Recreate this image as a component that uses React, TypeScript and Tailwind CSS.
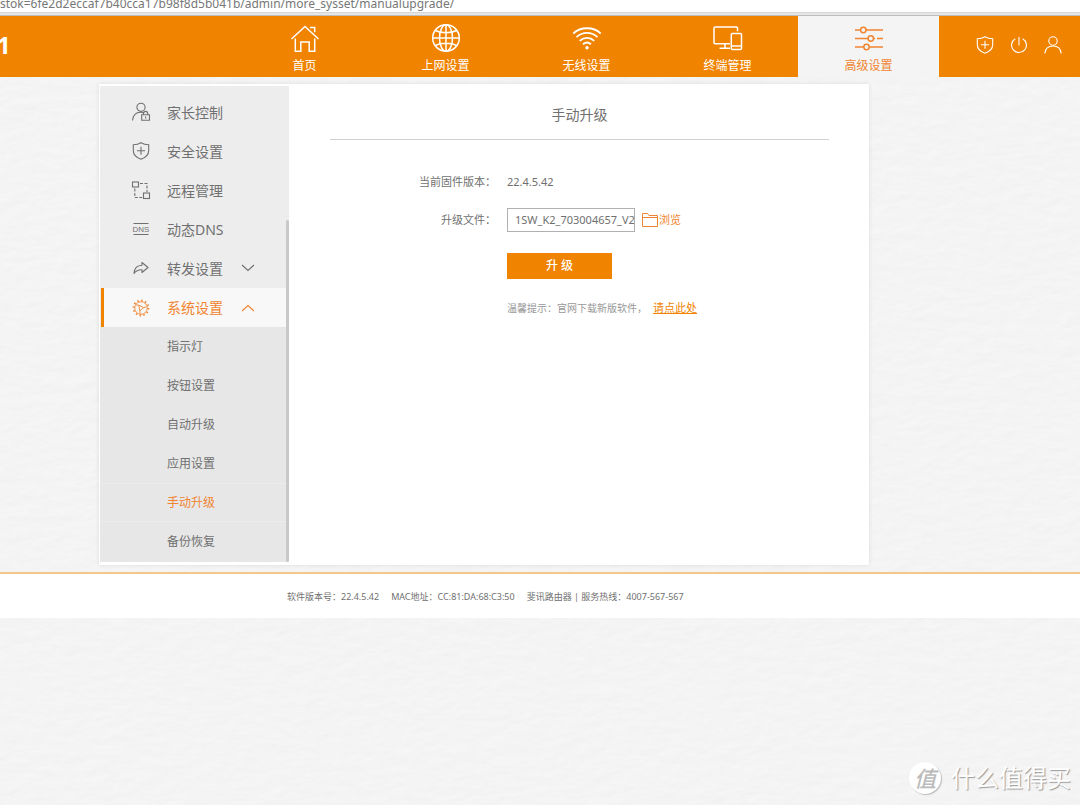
import { useState } from 'react'
import type { ReactNode } from 'react'

const NAV_ITEMS = [
  { id: 'home', label: '首页', icon: <HomeIcon /> },
  { id: 'wan', label: '上网设置', icon: <GlobeIcon /> },
  { id: 'wifi', label: '无线设置', icon: <WifiIcon /> },
  { id: 'devices', label: '终端管理', icon: <DevicesIcon /> },
  { id: 'advanced', label: '高级设置', icon: <SlidersIcon /> },
]

const MENU_ITEMS = [
  { id: 'parent', label: '家长控制', icon: <ParentIcon /> },
  { id: 'security', label: '安全设置', icon: <ShieldIcon /> },
  { id: 'remote', label: '远程管理', icon: <RemoteIcon /> },
  { id: 'ddns', label: '动态DNS', icon: <DnsIcon /> },
  { id: 'forward', label: '转发设置', icon: <ForwardIcon />, expandable: true },
]

const SYSTEM_ITEMS = ['指示灯', '按钮设置', '自动升级', '应用设置', '手动升级', '备份恢复']

export default function App() {
  return (
    <div className="relative flex min-h-screen flex-col overflow-hidden bg-[#f5f5f5] font-['Noto_Sans','Noto_Sans_CJK_SC',sans-serif] text-[#707070]">
      <PaperTexture />
      <div className="relative flex flex-col">
        <AddressBar />
        <Header />
        <div className="mt-[7px] mr-4 ml-[99px] flex max-w-[770px] bg-white p-[2px] pb-[3px] pl-px shadow-[0_0_4px_rgba(0,0,0,0.1)]">
          <Sidebar />
          <UpgradePanel />
        </div>
        <footer className="mt-[7px] flex h-[46px] items-center gap-3 border-t-2 border-[#f5c68c] bg-white pt-px pl-[287px] text-[9px] whitespace-nowrap">
          <span>软件版本号：22.4.5.42</span>
          <span>MAC地址：CC:81:DA:68:C3:50</span>
          <span>斐讯路由器 | 服务热线：4007-567-567</span>
        </footer>
      </div>
      <Watermark />
    </div>
  )
}

function AddressBar() {
  return (
    <div className="flex h-4 items-start border-b border-[#bdbdbd] bg-[#e6e6e6]">
      <div className="flex h-[13px] w-full items-end border-b border-[#d5d5d5] bg-white">
        <span className="text-[12px] leading-4 whitespace-nowrap text-[#777]">
          stok=6fe2d2eccaf7b40cca17b98f8d5b041b/admin/more_sysset/manualupgrade/
        </span>
      </div>
    </div>
  )
}

function Header() {
  const [active, setActive] = useState('advanced')

  return (
    <header className="flex h-[61px] bg-[#f08300] text-white">
      <div className="flex flex-1 items-center pb-1">
        <span className="-ml-[3px] text-[24px] font-bold">1</span>
      </div>
      <nav className="flex">
        {NAV_ITEMS.map((item) => (
          <button
            key={item.id}
            onClick={() => setActive(item.id)}
            className={`flex w-[141px] flex-col items-center pt-[7px] text-[12px] leading-4 ${
              active === item.id ? 'bg-[#f4f4f4] text-[#f08430]' : ''
            }`}
          >
            {item.icon}
            <span className="mt-[5px]">{item.label}</span>
          </button>
        ))}
      </nav>
      <div className="flex w-[141px] items-center justify-end gap-[14px] pr-[17px] pb-1">
        <button title="安全">
          <ShieldIcon />
        </button>
        <button title="重启">
          <PowerIcon />
        </button>
        <button title="用户">
          <UserIcon />
        </button>
      </div>
    </header>
  )
}

function Sidebar() {
  const [selected, setSelected] = useState('手动升级')

  return (
    <aside className="flex w-[189px] shrink-0 bg-[#ededed]">
      <div className="flex-1 pt-[7px]">
        {MENU_ITEMS.map((item) => (
          <button key={item.id} className="flex h-[39px] w-full items-center pb-px pl-[31px] text-[14px]">
            {item.icon}
            <span className="ml-4">{item.label}</span>
            {item.expandable && <Chevron className="ml-[18px]" />}
          </button>
        ))}
        <button className="ml-px flex h-[39px] w-[185px] items-center border-l-[3px] border-[#f08300] bg-[#f8f8f8] pl-[27px] text-[14px] text-[#f08430]">
          <GearIcon />
          <span className="ml-4">系统设置</span>
          <Chevron className="ml-[18px] rotate-180" />
        </button>
        <div className="bg-[#e7e7e7] pb-px">
          {SYSTEM_ITEMS.map((label) => (
            <button
              key={label}
              onClick={() => setSelected(label)}
              className={`flex h-[39px] w-full items-center pl-[67px] text-[12px] ${
                selected === label ? 'border-y border-[#ececec] text-[#f08430]' : ''
              }`}
            >
              {label}
            </button>
          ))}
        </div>
      </div>
      <div className="flex w-[3px] flex-col pt-[134px]">
        <div className="flex-1 rounded-full bg-[#c9c9c9]" />
      </div>
    </aside>
  )
}

function UpgradePanel() {
  const [file, setFile] = useState('1SW_K2_703004657_V22.4.5.42.bin')

  return (
    <main className="min-w-0 flex-1 pr-[38px] pl-[41px]">
      <h1 className="flex h-[54px] items-center justify-center border-b border-[#d0d0d0] pt-1 text-[14px]">手动升级</h1>
      <form className="mt-[29px] grid grid-cols-[166px_1fr] gap-x-[11px] text-[11px]" onSubmit={(e) => e.preventDefault()}>
        <span className="flex h-[26px] items-center justify-end">当前固件版本：</span>
        <span className="flex h-[26px] items-center">22.4.5.42</span>

        <label htmlFor="firmware" className="mt-[13px] flex h-6 items-center justify-end">
          升级文件：
        </label>
        <div className="mt-[13px] flex h-6 items-center">
          <input
            id="firmware"
            type="text"
            value={file}
            onChange={(e) => setFile(e.target.value)}
            className="h-6 w-[128px] border border-[#b0b0b0] bg-white pb-px pl-[7px] text-[11px] outline-none"
          />
          <button type="button" className="ml-[7px] flex items-center gap-px text-[#f08430]">
            <FolderIcon />
            浏览
          </button>
        </div>

        <button type="submit" className="col-start-2 mt-[21px] h-[26px] w-[105px] bg-[#f08300] text-[12px] font-medium text-white">
          升 级
        </button>

        <p className="col-start-2 mt-[21px] flex items-center text-[10px] leading-4 text-[#999]">
          温馨提示：官网下载新版软件，
          <a href="#download" className="ml-[6px] text-[11px] text-[#f08300] underline">
            请点此处
          </a>
        </p>
      </form>
    </main>
  )
}

function Watermark() {
  return (
    <div className="absolute right-[9px] bottom-[9px] flex items-center gap-[10px] text-white">
      <span className="flex size-8 items-center justify-center rounded-full bg-white text-[22px] leading-8 font-medium text-[#bbb] italic shadow-[1px_1px_1px_#bbb]">
        值
      </span>
      <span className="text-[24px] leading-9 [text-shadow:1px_1px_1px_#999]">什么值得买</span>
    </div>
  )
}

function PaperTexture() {
  return (
    <svg className="absolute inset-0 size-full opacity-20" aria-hidden="true">
      <filter id="paper">
        <feTurbulence type="fractalNoise" baseFrequency="0.05 0.1" numOctaves="3" seed="4" />
        <feDiffuseLighting surfaceScale="0.5" diffuseConstant="1.36" lightingColor="#f6f6f6">
          <feDistantLight azimuth="60" elevation="45" />
        </feDiffuseLighting>
      </filter>
      <rect width="100%" height="100%" filter="url(#paper)" />
    </svg>
  )
}

function NavSvg({ children }: { children: ReactNode }) {
  return (
    <svg width="30" height="30" viewBox="0 0 30 30" fill="none" stroke="currentColor" strokeWidth="1.5">
      {children}
    </svg>
  )
}

function MenuSvg({ children }: { children: ReactNode }) {
  return (
    <svg width="20" height="20" viewBox="0 0 20 20" fill="none" stroke="currentColor" strokeWidth="1.1">
      {children}
    </svg>
  )
}

function HomeIcon() {
  return (
    <NavSvg>
      <path d="M1.5 16 15 3.500 28.500 16M20 4.500h4.700v4.800M5.300 15.500v12.700h5.500V19h8.400v9.200h5.500V15.500" />
    </NavSvg>
  )
}

function GlobeIcon() {
  return (
    <NavSvg>
      <circle cx="15" cy="15" r="13.3" />
      <ellipse cx="15" cy="15" rx="6.5" ry="13.3" />
      <path d="M15 1.7v26.6M1.7 15h26.6M4.3 7.5C10 10.5 20 10.5 25.7 7.5M4.3 22.5C10 19.5 20 19.5 25.7 22.5" />
    </NavSvg>
  )
}

function WifiIcon() {
  return (
    <NavSvg>
      <path
        d="M1.3 10.5C8.7 3.5 21.3 3.5 28.7 10.5M4.5 14.2C10.5 8.5 19.5 8.5 25.5 14.2M7.7 17.8C12 14 18 14 22.3 17.8M11 21.2C13.5 19 16.5 19 19 21.2"
        strokeWidth="1.8"
      />
      <circle cx="15" cy="24.7" r="1.7" fill="currentColor" stroke="none" />
    </NavSvg>
  )
}

function DevicesIcon() {
  return (
    <NavSvg>
      <path d="M17 20.8H2.2Q1 20.8 1 19.5V5.2Q1 4 2.2 4H23.3Q24.5 4 24.5 5.2V8.2M6.5 25.3h10.5M12 20.8v4.5" />
      <rect x="18.3" y="10.5" width="10.2" height="16" rx="1" />
      <path d="M18.3 23h10.2" />
    </NavSvg>
  )
}

function SlidersIcon() {
  return (
    <NavSvg>
      <path d="M1 7h5.6M12 7h17M1 15.5h13M19.4 15.5H21M23 15.5h6M1 24h8.8M15.2 24H29" />
      <circle cx="9.3" cy="7" r="2.7" />
      <circle cx="16.8" cy="15.5" r="2.7" />
      <circle cx="12.5" cy="24" r="2.7" />
    </NavSvg>
  )
}

function ShieldIcon() {
  return (
    <MenuSvg>
      <path d="M10 1.7C7.5 3.3 5 3.7 2.3 3.7V9.5C2.3 14 5.5 16.7 10 18.2 14.5 16.7 17.7 14 17.7 9.5V3.7C15 3.7 12.5 3.3 10 1.7ZM10 5.8v8M6 9.8h8" />
    </MenuSvg>
  )
}

function PowerIcon() {
  return (
    <MenuSvg>
      <path d="M10 2v8.5M6.3 3.7a7.4 7.4 0 1 0 7.4 0" />
    </MenuSvg>
  )
}

function UserIcon() {
  return (
    <MenuSvg>
      <circle cx="10" cy="6" r="4.2" />
      <path d="M1.8 18.5C2.3 13.3 5.7 11 10 11s7.7 2.3 8.2 7.5" />
    </MenuSvg>
  )
}

function ParentIcon() {
  return (
    <MenuSvg>
      <circle cx="10" cy="5.3" r="4.1" />
      <path d="M1.5 18.5C2 13.5 5 10.2 9.5 10.2c1.2 0 2.2.2 3.2.7" />
      <path d="M10.7 12.8h7.8v5.5h-7.8zM12.5 12.8v-1.3a2.1 2.1 0 0 1 4.2 0v1.3M14.6 14.5v2" />
    </MenuSvg>
  )
}

function RemoteIcon() {
  return (
    <MenuSvg>
      <rect x="1.5" y="2" width="6" height="5" />
      <rect x="12.5" y="13" width="6" height="5.5" />
      <path d="M9 3.5h7V12M3.8 8.5v9H12" strokeDasharray="3 1.5" />
    </MenuSvg>
  )
}

function DnsIcon() {
  return (
    <MenuSvg>
      <path d="M2.5 4.5h15M2.5 15.5h15" />
      <text x="10" y="12.8" textAnchor="middle" fontSize="8" fill="currentColor" stroke="none" className="font-['Liberation_Sans',sans-serif]">
        DNS
      </text>
    </MenuSvg>
  )
}

function ForwardIcon() {
  return (
    <MenuSvg>
      <path d="M11 4.5 17 9.5 11 14.5V11.7C7.5 11.5 5 12.5 3 15.5 3.3 10.5 6.500 7.500 11 7.300Z" strokeLinejoin="round" />
    </MenuSvg>
  )
}

function GearIcon() {
  return (
    <MenuSvg>
      <circle cx="10" cy="10" r="6.3" strokeWidth="0.9" />
      <circle cx="10" cy="10" r="7.5" strokeWidth="1.8" strokeDasharray="1.4 2.527" />
      <path d="M7.8 7.2 12.7 9.6 8.8 12.8ZM4.8 7l3 .2M12.7 9.6l3-.8M8.8 12.8l.3 3" strokeWidth="0.9" />
    </MenuSvg>
  )
}

function FolderIcon() {
  return (
    <svg width="16" height="16" viewBox="0 0 16 16" fill="none" stroke="currentColor" strokeWidth="1">
      <path d="M.5 14.5V1.5H5.5L7 3.500H15.500V14.500ZM.5 5.500H15.500" />
    </svg>
  )
}

function Chevron({ className }: { className?: string }) {
  return (
    <svg className={className} width="14" height="8" viewBox="0 0 14 8" fill="none" stroke="currentColor" strokeWidth="1.1">
      <path d="M1 1l6 5.5L13 1" />
    </svg>
  )
}
